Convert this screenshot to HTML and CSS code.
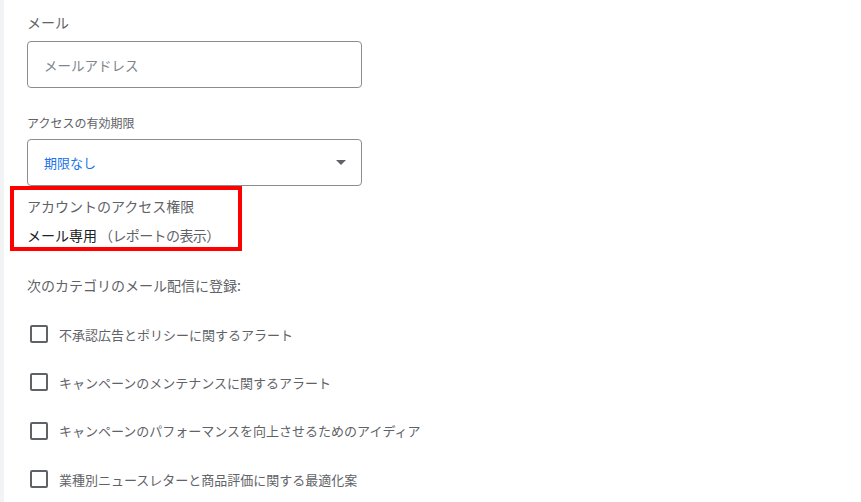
FILE: index.html
```html
<!DOCTYPE html>
<html lang="ja">
<head>
    <meta charset="UTF-8">
    <meta name="viewport" content="width=device-width, initial-scale=1.0">
    <title>ユーザーを招待</title>
    <link rel="stylesheet" href="styles.css">
</head>
<body>
    <div class="page">
        <div class="rail"></div>
        <div class="form">
            <label class="label" for="email">メール</label>
            <input type="text" id="email" class="field" placeholder="メールアドレス">

            <div class="label small">アクセスの有効期限</div>
            <div class="field select">
                <span class="select-value">期限なし</span>
                <svg class="arrow" width="10" height="5" viewBox="0 0 10 5"><path d="M0 0h10L5 5z" fill="#5f6368"/></svg>
            </div>

            <!-- highlighted block -->
            <div class="highlight">
                <div class="perm-title">アカウントのアクセス権限</div>
                <div class="perm-value"><span class="strong">メール専用</span><span class="note">（レポートの表示）</span></div>
            </div>

            <div class="subscribe-title">次のカテゴリのメール配信に登録:</div>

            <ul class="checks">
                <li><input type="checkbox" class="box"><span>不承認広告とポリシーに関するアラート</span></li>
                <li><input type="checkbox" class="box"><span>キャンペーンのメンテナンスに関するアラート</span></li>
                <li><input type="checkbox" class="box"><span>キャンペーンのパフォーマンスを向上させるためのアイディア</span></li>
                <li><input type="checkbox" class="box"><span>業種別ニュースレターと商品評価に関する最適化案</span></li>
            </ul>
        </div>
    </div>
</body>
</html>
```

FILE: styles.css
```css
body {
    margin: 0;
    background: white;
    font-family: "Noto Sans CJK JP", "Noto Sans", sans-serif;
    color: #5f6368;
}
.page {
    display: flex;
    min-height: 502px;
}
.rail {
    width: 4px;
    background-color: #f1f3f4;
}
.form {
    display: flex;
    flex-direction: column;
    align-items: flex-start;
    padding-left: 23px;
}
.label {
    display: block;
    margin-top: 12px;
    font-size: 14px;
    line-height: 20px;
}
.label.small {
    margin-top: 26px;
    font-size: 12px;
    line-height: 18px;
}
.field {
    box-sizing: border-box;
    width: 335px;
    height: 47px;
    margin: 9px 0 0 0;
    padding: 0 16px;
    border: 1px solid #8a8d91;
    border-radius: 4px;
    font-family: inherit;
    font-size: 13.5px;
    color: #202124;
    background: white;
    outline: none;
}
.field::placeholder {
    color: #80868b;
}
.select {
    display: flex;
    align-items: center;
    justify-content: space-between;
    margin-top: 7px;
    padding-right: 15px;
}
.select-value {
    color: #1a73e8;
    font-size: 13px;
}
.highlight {
    box-sizing: border-box;
    width: 232px;
    margin-left: -17px;
    padding: 6px 0 2px 13px;
    border: 4px solid #ff0000;
}
.perm-title {
    font-size: 14px;
    line-height: 20px;
}
.perm-value {
    margin-top: 9px;
    font-size: 14px;
    line-height: 20px;
    text-spacing-trim: space-all;
}
.strong {
    color: #202124;
}
.note {
    margin-left: 2px;
    letter-spacing: -0.6px;
}
.subscribe-title {
    margin-top: 24px;
    font-size: 14px;
    line-height: 20px;
}
.checks {
    list-style: none;
    margin: 15px 0 0 0;
    padding: 0;
}
.checks li {
    display: flex;
    align-items: center;
    height: 48.3px;
    font-size: 13px;
}
.box {
    appearance: none;
    box-sizing: border-box;
    width: 18px;
    height: 18px;
    margin: 0 11px 0 3px;
    border: 2px solid #5f6368;
    border-radius: 2px;
}
```
